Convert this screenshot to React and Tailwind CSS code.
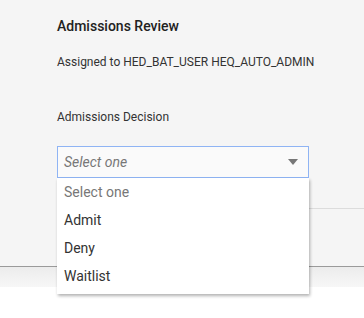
import React from "react";

const OPTIONS = ["Admit", "Deny", "Waitlist"];

export default function App() {
  return (
    <div className="w-[364px] h-[318px] bg-white overflow-hidden font-['Roboto',sans-serif] text-[#333]">
      {/* review panel */}
      <div className="h-[267px] bg-[#f5f5f5] border-b border-[#9a9a9a] pl-[57px] pt-[16px]">
        <h2 className="text-[14px] leading-[20px] font-medium text-[#222]">Admissions Review</h2>
        <p className="mt-[18px] text-[12px] leading-[16px]">Assigned to HED_BAT_USER HEQ_AUTO_ADMIN</p>
        <p className="mt-[39px] text-[12px] leading-[16px]">Admissions Decision</p>

        <div className="relative mt-[21px] w-[252px]">
          <div className="h-[32px] flex items-center justify-between bg-[#fafafa] border border-[#8fb4f4] pl-[6px] pr-[10px]">
            <span className="italic text-[14px] text-[#777]">Select one</span>
            <span className="w-0 h-0 border-l-[5px] border-r-[5px] border-t-[6px] border-l-transparent border-r-transparent border-t-[#777]"></span>
          </div>
          <ul className="absolute left-0 top-[32px] w-[252px] bg-white shadow-[1px_2px_3px_rgba(0,0,0,0.3)] pb-[4px] z-10">
            <li className="h-[28px] flex items-center pl-[7px] text-[14px] text-[#777]">Select one</li>
            {OPTIONS.map((o) => (
              <li key={o} className="h-[28px] flex items-center pl-[7px] text-[14px] text-[#333]">{o}</li>
            ))}
          </ul>
        </div>

        <div className="mt-[30px] border-t border-[#dcdcdc]"></div>
      </div>
      <div className="h-[20px] bg-gradient-to-b from-[#ececec] to-[#f7f7f7]"></div>
    </div>
  );
}
